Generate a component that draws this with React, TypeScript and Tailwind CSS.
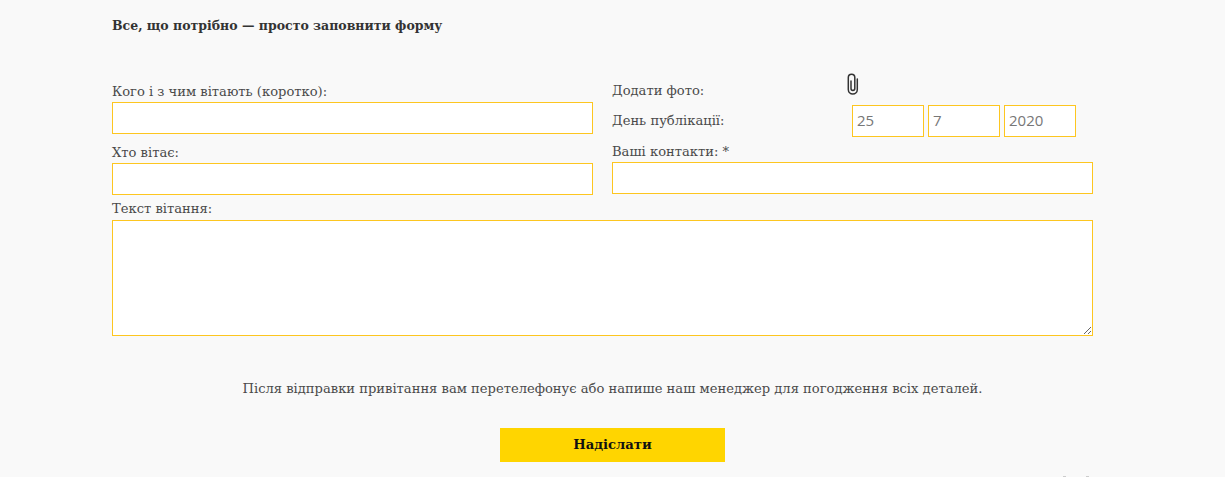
import React from 'react';

const serif = 'font-["DejaVu_Serif",serif]';
const label = `block text-[13.1px] leading-[18px] text-[#4a4a4a] ${serif}`;
const field = 'block w-full border border-[#fdc620] bg-white outline-none';
const dateField = 'w-[72px] h-[32px] border border-[#fdc620] bg-white px-1 pb-[2px] text-[15px] text-[#777] font-["Open_Sans",sans-serif] outline-none';

function Paperclip() {
  return (
    <svg width="12" height="22" viewBox="0 0 12 22" fill="none" stroke="#333" strokeWidth="1.5" strokeLinecap="round" className="-mt-[14px] shrink-0">
      <path d="M4 8v7.5a1.9 1.9 0 0 0 3.8 0V4.5a3.2 3.2 0 0 0-6.5 0v12a4.5 4.5 0 0 0 9 0V6" />
    </svg>
  );
}

export default function App() {
  return (
    <div className="h-[477px] w-full overflow-hidden bg-[#f9f9f9]">
      <div className="mx-auto w-[1001px]">
        <h2 className={`pt-[17px] text-[12.5px] leading-[18px] font-bold text-[#333] ${serif}`}>
          Все, що потрібно — просто заповнити форму
        </h2>
        <div className="w-[981px]">
          <div className="mt-[46px] grid grid-cols-[481px_481px] gap-x-[19px]">
            <div>
              <label className={`${label} mt-[2px] mb-[1px]`}>Кого і з чим вітають (коротко):</label>
              <input className={`${field} h-[32px]`} />
              <label className={`${label} mt-[10px] mb-[1px]`}>Хто вітає:</label>
              <input className={`${field} h-[32px]`} />
            </div>
            <div>
              <div className="mt-[1px] flex h-[18px] items-center">
                <span className={`${label} w-[235px]`}>Додати фото:</span>
                <Paperclip />
              </div>
              <div className="mt-[5px] flex items-center">
                <span className={`${label} w-[240px]`}>День публікації:</span>
                <div className="flex gap-[4px]">
                  <input className={dateField} defaultValue="25" />
                  <input className={dateField} defaultValue="7" />
                  <input className={dateField} defaultValue="2020" />
                </div>
              </div>
              <label className={`${label} mt-[6px] mb-[1px]`}>Ваші контакти: *</label>
              <input className={`${field} h-[32px]`} />
            </div>
          </div>
          <label className={`${label} mt-[5px] mb-[2px]`}>Текст вітання:</label>
          <textarea className={`${field} h-[116px]`} />
        </div>
        <p className={`mt-[44px] text-center text-[13.1px] leading-[18px] text-[#4a4a4a] ${serif}`}>
          Після відправки привітання вам перетелефонує або напише наш менеджер для погодження всіх деталей.
        </p>
        <div className="mt-[30px] flex justify-center">
          <button className={`h-[34px] w-[225px] bg-[#ffd500] text-[13.2px] font-bold text-[#111] ${serif}`}>
            Надіслати
          </button>
        </div>
        <div className="mt-[14px] ml-[951px] flex gap-[20px]">
          <span className="h-[1px] w-[3px] bg-[#ccc]" />
          <span className="h-[1px] w-[3px] bg-[#ccc]" />
        </div>
      </div>
    </div>
  );
}
